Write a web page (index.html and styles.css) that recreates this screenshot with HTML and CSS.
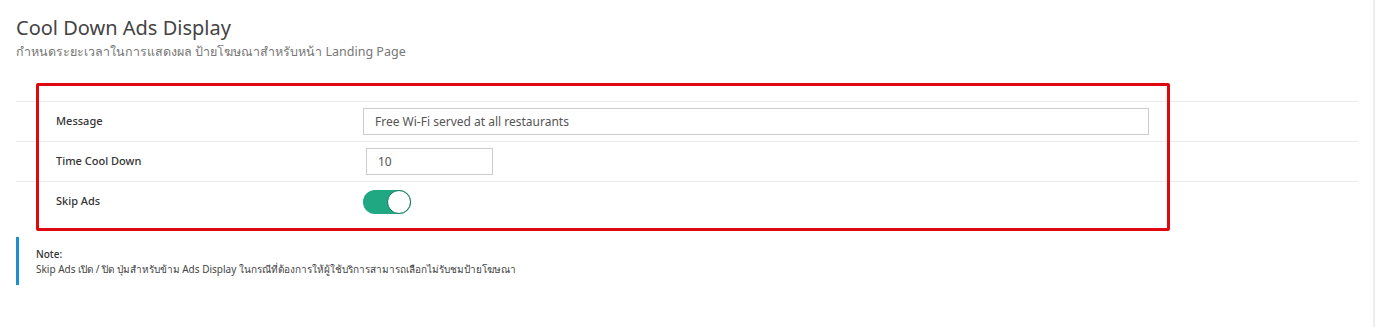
FILE: index.html
```html
<!DOCTYPE html>
<html lang="th">
<head>
    <meta charset="UTF-8">
    <meta name="viewport" content="width=device-width, initial-scale=1.0">
    <title>Cool Down Ads Display</title>
    <link rel="stylesheet" href="styles.css">
</head>
<body>

    <div class="page">
        <h1 class="title">Cool Down Ads Display</h1>
        <p class="subtitle">กำหนดระยะเวลาในการแสดงผล ป้ายโฆษณาสำหรับหน้า Landing Page</p>

        <div class="settings">
            <div class="row">
                <div class="label">Message</div>
                <div class="field">
                    <input type="text" class="input input-wide" value="Free Wi-Fi served at all restaurants">
                </div>
            </div>
            <div class="row">
                <div class="label">Time Cool Down</div>
                <div class="field">
                    <input type="text" class="input input-short" value="10">
                </div>
            </div>
            <div class="row">
                <div class="label">Skip Ads</div>
                <div class="field">
                    <label class="switch">
                        <input type="checkbox" checked>
                        <span class="slider"></span>
                    </label>
                </div>
            </div>

            <!-- highlight drawn over the form -->
            <div class="highlight"></div>
        </div>

        <div class="note">
            <strong>Note:</strong>
            <p>Skip Ads เปิด / ปิด ปุ่มสำหรับข้าม Ads Display ในกรณีที่ต้องการให้ผู้ใช้บริการสามารถเลือกไม่รับชมป้ายโฆษณา</p>
        </div>
    </div>

</body>
</html>
```

FILE: styles.css
```css
html, body {
    margin: 0;
    height: 100%;
}
body {
    font-family: 'Noto Sans', 'Open Sans', sans-serif;
    background-color: #fff;
    color: #333;
}
.page {
    box-sizing: border-box;
    height: 100%;
    padding: 15px 15px 0 16px;
    margin-right: 1px;
    border-right: 2px solid #ececec;
}
.title {
    font-size: 20px;
    font-weight: 400;
    color: #444;
    margin: 0;
    line-height: 26px;
}
.subtitle {
    font-size: 12.5px;
    color: #777;
    margin: 1px 0 0;
    line-height: 20px;
}
.settings {
    position: relative;
    margin-top: 39px;
}
.row {
    box-sizing: border-box;
    display: flex;
    align-items: center;
    height: 40px;
    border-top: 1px solid #ebebeb;
}
.label {
    width: 307px;
    padding: 0 0 3px 40px;
    font-size: 11px;
    font-weight: 500;
    color: #333;
}
.field {
    flex: 1;
    display: flex;
    align-items: center;
}
.input {
    box-sizing: border-box;
    height: 27px;
    border: 1px solid #ccc;
    padding: 0 11px;
    font-family: 'Noto Sans', 'Open Sans', sans-serif;
    font-size: 12px;
    color: #555;
    outline: none;
}
.input-wide {
    width: 786px;
}
.input-short {
    width: 127px;
    margin-left: 3px;
}
.switch {
    position: relative;
    display: inline-block;
    width: 48px;
    height: 24px;
}
.switch input {
    display: none;
}
.slider {
    position: absolute;
    inset: 0;
    background-color: #1fa882;
    border-radius: 12px;
    cursor: pointer;
}
.slider::after {
    content: "";
    position: absolute;
    right: 0;
    top: 0;
    box-sizing: border-box;
    width: 24px;
    height: 24px;
    background-color: #fff;
    border: 1.5px solid #12775b;
    border-radius: 50%;
}
.highlight {
    position: absolute;
    left: 20px;
    top: -18px;
    width: 1134px;
    height: 148px;
    border: 3px solid #e0080f;
    border-radius: 2px;
    box-sizing: border-box;
}
.note {
    margin-top: 16px;
    border-left: 3px solid #1a8fd0;
    padding: 10px 0 8px 17px;
    font-size: 10px;
    line-height: 15px;
    color: #444;
}
.note strong {
    font-weight: 500;
    color: #333;
}
.note p {
    margin: 0;
}
```
